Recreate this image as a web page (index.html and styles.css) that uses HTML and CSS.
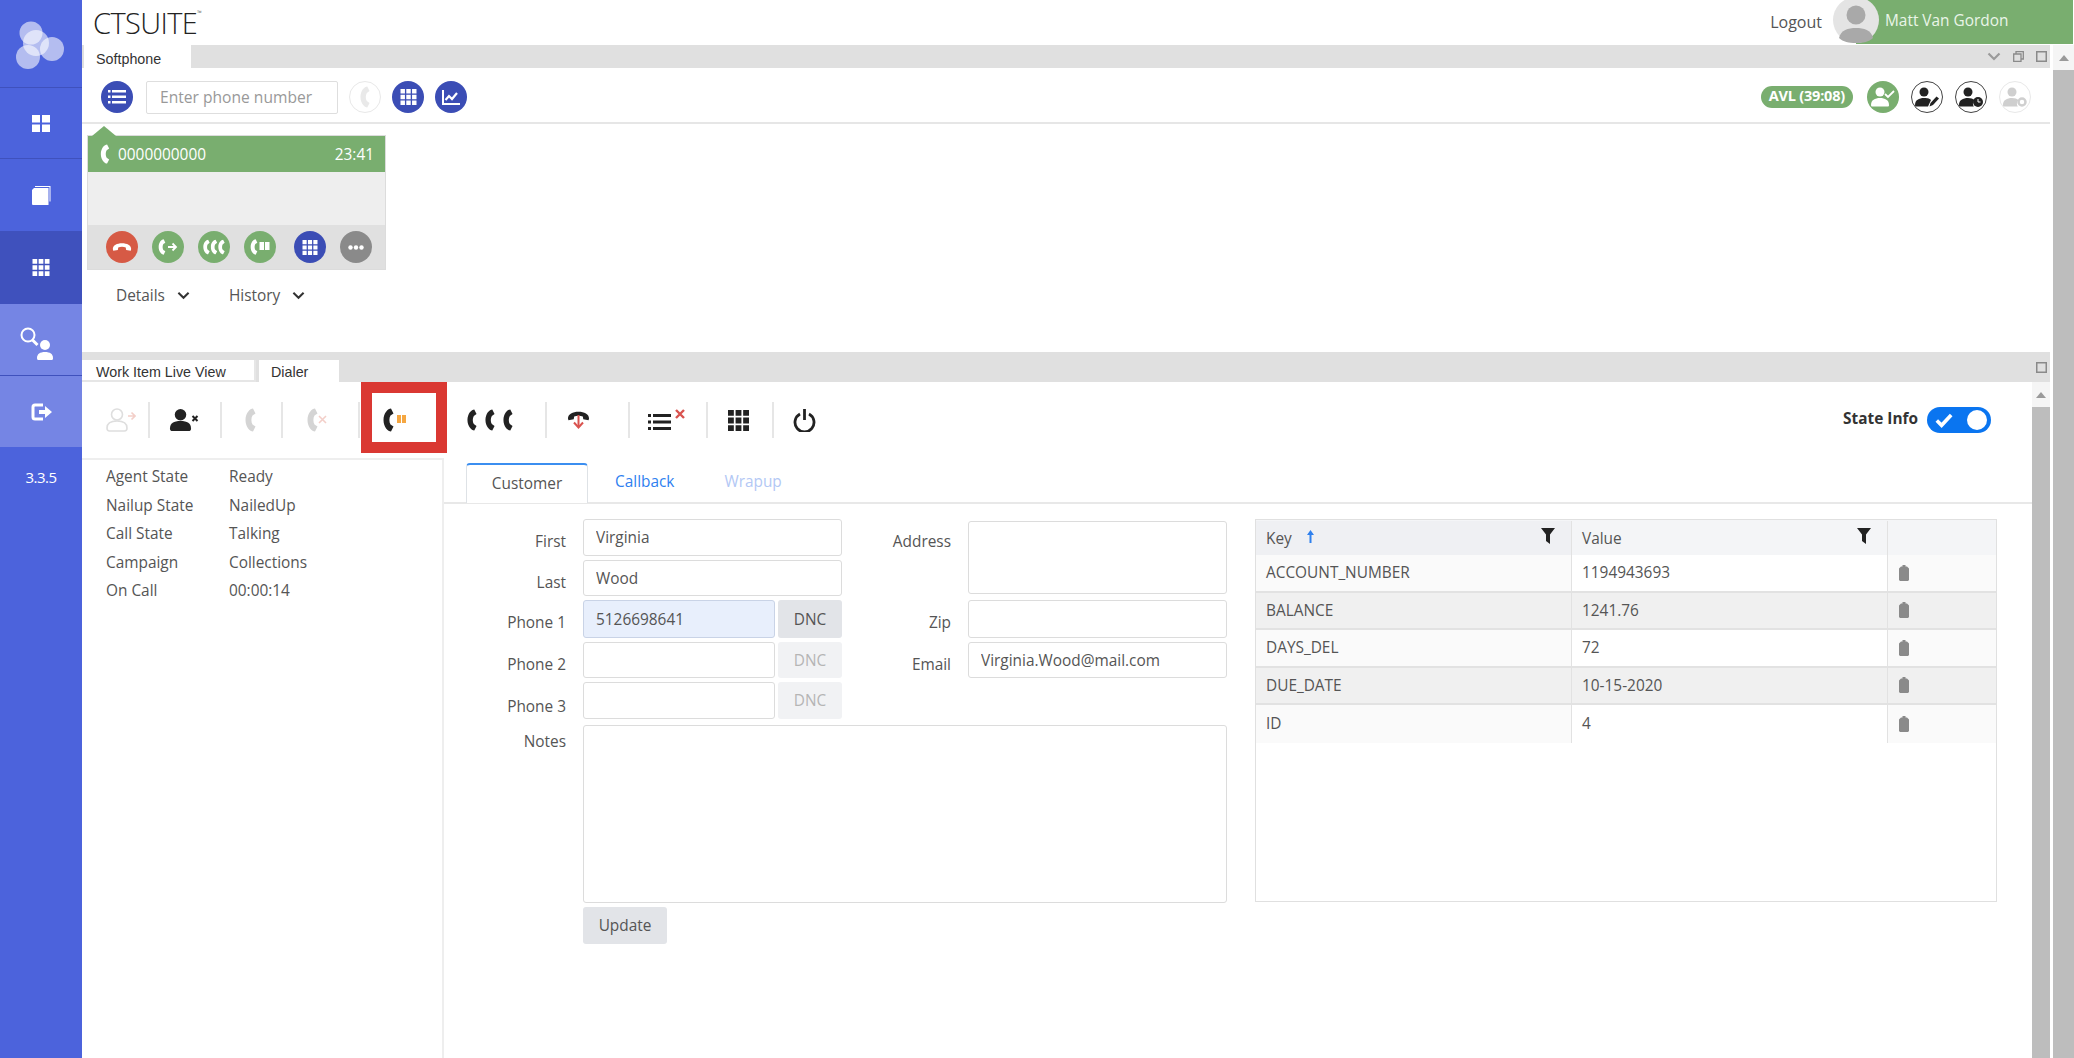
FILE: index.html
```html
<!DOCTYPE html>
<html lang="en">

<head>
  <meta charset="UTF-8">
  <title>CTSuite</title>
  <link rel="stylesheet" href="styles.css">
</head>

<body>
  <svg class="icon-defs" xmlns="http://www.w3.org/2000/svg">
    <symbol id="i-phone" viewBox="0 0 11 24">
      <path d="M8 .5l2.500 5-3 2c-1.500 2.500-1.500 6.500 0 9l3 2-2.500 5C5 23.500.5 19 .5 12S5 .5 8 .5z" />
    </symbol>
    <symbol id="i-person" viewBox="0 0 24 24">
      <circle cx="12" cy="6.500" r="6" />
      <path d="M1 21c0-6 4-8 11-8s11 2 11 8c0 1.500-1 2.500-2.500 2.500h-17C2 23.500 1 22.500 1 21z" />
    </symbol>
    <symbol id="i-grid3" viewBox="0 0 18 18">
      <path d="M0 0h5v5H0zM6.500 0h5v5h-5zM13 0h5v5h-5zM0 6.500h5v5H0zM6.500 6.500h5v5h-5zM13 6.500h5v5h-5zM0 13h5v5H0zM6.500 13h5v5h-5zM13 13h5v5h-5z" />
    </symbol>
    <symbol id="i-hangup" viewBox="0 0 24 12">
      <path d="M1 8.500C1 4 6 1.500 12 1.500S23 4 23 8.500l-.5 2-5.500-1-.5-3c-2.500-1-6.500-1-9 0l-.5 3-5.500 1z" />
    </symbol>
    <symbol id="i-funnel" viewBox="0 0 14 16">
      <path d="M0 0h14L9 6.500V16L5 13V6.500z" />
    </symbol>
    <symbol id="i-trash" viewBox="0 0 10 16">
      <path d="M3.500 0h3v1.500H8l2 2V15l-1 1H1l-1-1V3.500l2-2h1.500z" />
    </symbol>
    <symbol id="i-chevron" viewBox="0 0 14 9">
      <path d="M1.500 1.500L7 7l5.500-5.500" fill="none" stroke="currentColor" stroke-width="2.200" />
    </symbol>
    <symbol id="i-box" viewBox="0 0 11 11">
      <path d="M.75.75h9.500v9.500H.75z" fill="none" stroke="currentColor" stroke-width="1.500" />
    </symbol>
  </svg>

  <div class="app">
    <aside class="sidebar">
      <div class="side-logo">
        <svg width="56" height="60" viewBox="0 0 56 60">
          <g fill="#fff" fill-opacity=".58">
            <circle cx="21" cy="22" r="11.500" />
            <circle cx="26" cy="32" r="13" />
            <circle cx="42" cy="38" r="12" />
            <circle cx="18" cy="46" r="12" />
          </g>
        </svg>
      </div>
      <div class="side-item">
        <svg width="18" height="17" viewBox="0 0 18 17" fill="#fff">
          <path d="M0 0h8v7.500H0zM10 0h8v7.500h-8zM0 9.500h8V17H0zM10 9.500h8V17h-8z" />
        </svg>
      </div>
      <div class="side-item">
        <svg width="19" height="19" viewBox="0 0 19 19" fill="#fff">
          <path d="M3 0h15.500v15.500h-1V1H3z" />
          <path d="M2 2h14.500v17H1a1 1 0 0 1-1-1V4z" />
        </svg>
      </div>
      <div class="side-item side-dark">
        <svg width="18" height="17" fill="#fff"><use href="#i-grid3" /></svg>
      </div>
      <div class="side-item side-light">
        <svg class="side-search" width="34" height="40" viewBox="0 0 34 40" fill="#fff">
          <circle cx="8" cy="15" r="6.500" fill="none" stroke="#fff" stroke-width="2" />
          <path d="M12.500 20l5 5" stroke="#fff" stroke-width="3" />
          <circle cx="25" cy="25" r="5" />
          <path d="M17 38c0-4 3-6 8-6s8 2 8 6c0 1.500-.5 2-1.500 2h-13c-1 0-1.500-.5-1.500-2z" />
        </svg>
      </div>
      <div class="side-item side-light">
        <svg width="21" height="18" viewBox="0 0 21 18" fill="#fff">
          <path d="M12 2H4a2 2 0 0 0-2 2v10a2 2 0 0 0 2 2h8" fill="none" stroke="#fff" stroke-width="3" />
          <path d="M8 7h6V3l7 6-7 6v-4H8z" />
        </svg>
      </div>
      <div class="side-version">3.3.5</div>
    </aside>

    <div class="main">
      <header class="topbar">
        <div class="brand">CTSUITE<sup>™</sup></div>
        <div class="user-area">
          <span class="logout">Logout</span>
          <svg class="avatar" width="46" height="44" viewBox="0 0 46 44">
            <circle cx="23" cy="20" r="23" fill="#e4e4e4" />
            <circle cx="23" cy="15" r="9.500" fill="#a9a9a9" />
            <path d="M6 38c2-8 9-10 17-10s15 2 17 10c-4 4-10 5-17 5S10 42 6 38z" fill="#a9a9a9" />
          </svg>
          <span class="user-pill">Matt Van Gordon</span>
        </div>
      </header>

      <div class="workspace">
        <div class="panels">
          <section class="softphone">
            <div class="tabbar tabbar-top">
              <span class="tab tab-soft">Softphone</span>
              <div class="window-btns">
                <svg class="win-chevron" width="14" height="9"><use href="#i-chevron" /></svg>
                <svg width="11" height="11" viewBox="0 0 11 11" fill="none" stroke="#8a8a8a" stroke-width="1.300">
                  <path d="M.7 3h7.300v7.300H.7zM3 3V.7h7.300V8H8" />
                </svg>
                <svg width="11" height="11"><use href="#i-box" /></svg>
              </div>
            </div>

            <div class="phone-toolbar">
              <span class="circle blue">
                <svg width="18" height="16" viewBox="0 0 18 16" fill="#fff">
                  <path d="M0 1h2.500v2.500H0zM4 1h14v2.500H4zM0 6.500h2.500V9H0zM4 6.500h14V9H4zM0 12h2.500v2.500H0zM4 12h14v2.500H4z" />
                </svg>
              </span>
              <input class="phone-input" type="text" placeholder="Enter phone number">
              <span class="circle faded">
                <svg width="10" height="22" fill="#e9e9e9"><use href="#i-phone" /></svg>
              </span>
              <span class="circle blue">
                <svg width="17" height="16" fill="#fff"><use href="#i-grid3" /></svg>
              </span>
              <span class="circle blue">
                <svg width="18" height="15" viewBox="0 0 18 15" fill="none" stroke="#fff">
                  <path d="M1 0v14h17" stroke-width="2" />
                  <path d="M3.500 10l3.500-4 3 3 5-6" stroke-width="2.200" />
                </svg>
              </span>

              <div class="status-group">
                <span class="avl">AVL (39:08)</span>
                <span class="circle green">
                  <svg width="24" height="20" viewBox="0 0 24 20" fill="#fff">
                    <circle cx="9" cy="5" r="4.500" />
                    <path d="M0 18c0-5 4-7 9-7s9 2 9 7c0 1-.5 1.500-1.500 1.500h-15C.5 19.500 0 19 0 18z" />
                    <path d="M14 7l3 3 6-6" fill="none" stroke="#fff" stroke-width="1.800" />
                  </svg>
                </span>
                <span class="circle outlined">
                  <svg width="24" height="20" viewBox="0 0 24 20" fill="#222">
                    <circle cx="9" cy="5" r="4.500" />
                    <path d="M0 18c0-5 4-7 9-7s6 1 7 2l-3 6.500H1.500C.5 19.500 0 19 0 18z" />
                    <path d="M14.500 19.500l1-3.500 6-6.500 2.500 2-6 6.500z" />
                  </svg>
                </span>
                <span class="circle outlined">
                  <svg width="24" height="20" viewBox="0 0 24 20" fill="#222">
                    <circle cx="9" cy="5" r="4.500" />
                    <path d="M0 18c0-5 4-7 9-7 3 0 5 .7 6.500 2-2 2-2 4.500-.7 6.500H1.500C.5 19.500 0 19 0 18z" />
                    <circle cx="19" cy="15" r="5" />
                    <path d="M19 12v3h2.500" fill="none" stroke="#fff" />
                  </svg>
                </span>
                <span class="circle faded">
                  <svg width="24" height="20" viewBox="0 0 24 20" fill="#cfcfcf">
                    <circle cx="9" cy="5" r="4.500" />
                    <path d="M0 18c0-5 4-7 9-7 3 0 5 .7 6.500 2-2 2-2 4.500-.7 6.500H1.500C.5 19.500 0 19 0 18z" />
                    <circle cx="19" cy="15" r="3.500" fill="none" stroke="#cfcfcf" stroke-width="2.500" />
                  </svg>
                </span>
              </div>
            </div>

            <div class="softphone-body">
              <div class="call-card">
                <div class="call-head">
                  <svg width="10" height="20" fill="#fff"><use href="#i-phone" /></svg>
                  <span class="call-number">0000000000</span>
                  <span class="call-time">23:41</span>
                </div>
                <div class="call-body"></div>
                <div class="call-foot">
                  <span class="circle red">
                    <svg width="20" height="10" fill="#fff"><use href="#i-hangup" /></svg>
                  </span>
                  <span class="circle green">
                    <svg width="20" height="16" viewBox="0 0 20 16" fill="#fff">
                      <use href="#i-phone" width="8" height="16" />
                      <path d="M10 8h8M14.500 4.500L18 8l-3.500 3.500" fill="none" stroke="#fff" stroke-width="1.800" />
                    </svg>
                  </span>
                  <span class="circle green">
                    <svg width="22" height="16" viewBox="0 0 22 16" fill="#fff">
                      <use href="#i-phone" width="7" height="16" />
                      <use href="#i-phone" x="7.500" width="7" height="16" />
                      <use href="#i-phone" x="15" width="7" height="16" />
                    </svg>
                  </span>
                  <span class="circle green">
                    <svg width="20" height="16" viewBox="0 0 20 16" fill="#fff">
                      <use href="#i-phone" width="8" height="16" />
                      <path d="M9.500 3H14v8H9.500zM15 3h4.500v8H15z" />
                    </svg>
                  </span>
                  <span class="circle blue foot-gap">
                    <svg width="16" height="15" fill="#fff"><use href="#i-grid3" /></svg>
                  </span>
                  <span class="circle gray">
                    <svg width="16" height="5" viewBox="0 0 16 5" fill="#fff">
                      <circle cx="2.500" cy="2.500" r="2.200" />
                      <circle cx="8" cy="2.500" r="2.200" />
                      <circle cx="13.500" cy="2.500" r="2.200" />
                    </svg>
                  </span>
                </div>
              </div>
              <div class="call-links">
                <span class="call-link">Details
                  <svg width="13" height="9"><use href="#i-chevron" /></svg>
                </span>
                <span class="call-link">History
                  <svg width="13" height="9"><use href="#i-chevron" /></svg>
                </span>
              </div>
            </div>
          </section>

          <section class="dialer">
            <div class="tabbar tabbar-low">
              <span class="tab tab-live">Work Item Live View</span>
              <span class="tab tab-dialer">Dialer</span>
              <div class="window-btns">
                <svg width="11" height="11"><use href="#i-box" /></svg>
              </div>
            </div>

            <div class="dialer-wrap">
              <div class="dialer-content">
                <div class="dial-toolbar">
                  <svg class="ml-24" width="30" height="24" viewBox="0 0 30 24">
                    <g fill="none" stroke="#dedede" stroke-width="1.600">
                      <circle cx="11" cy="6.500" r="5.500" />
                      <path d="M1 20c0-5 4-7 10-7s10 2 10 7c0 2-1 3-2.500 3h-15C2 23 1 22 1 20z" />
                    </g>
                    <path d="M22 8h7M25.500 4.500L29 8l-3.500 3.500" fill="none" stroke="#f3cfc9" stroke-width="1.600" />
                  </svg>
                  <span class="tool-sep ml-12"></span>
                  <svg class="ml-19" width="30" height="24" viewBox="0 0 30 24">
                    <use href="#i-person" width="23" height="24" fill="#222" />
                    <path d="M23.500 8l5 5m0-5l-5 5" stroke="#222" stroke-width="2" />
                  </svg>
                  <span class="tool-sep ml-21"></span>
                  <svg class="ml-23" width="11" height="24" fill="#d4d4d4"><use href="#i-phone" /></svg>
                  <span class="tool-sep ml-25"></span>
                  <svg class="ml-24" width="20" height="24" viewBox="0 0 20 24">
                    <use href="#i-phone" width="11" height="24" fill="#d4d4d4" />
                    <path d="M12 8l7 7m0-7l-7 7" stroke="#f3cfc9" stroke-width="1.600" />
                  </svg>
                  <span class="tool-sep ml-31"></span>
                  <div class="hold-box ml-1">
                    <svg width="24" height="24" viewBox="0 0 24 24">
                      <use href="#i-phone" width="11" height="24" fill="#222" />
                      <path d="M14 7h4v8h-4zM19 7h4v8h-4z" fill="#f5a742" />
                    </svg>
                  </div>
                  <svg class="ml-20" width="46" height="24" viewBox="0 0 46 24" fill="#222">
                    <use href="#i-phone" width="10" height="24" />
                    <use href="#i-phone" x="18" width="10" height="24" />
                    <use href="#i-phone" x="36" width="10" height="24" />
                  </svg>
                  <span class="tool-sep ml-32"></span>
                  <svg class="ml-20" width="23" height="20" viewBox="0 0 23 20">
                    <use href="#i-hangup" width="23" height="12" fill="#222" />
                    <path d="M11.500 5v12" stroke="#d9534f" stroke-width="2" />
                    <path d="M7 12.500l4.500 5 4.500-5" fill="none" stroke="#d9534f" stroke-width="2" />
                  </svg>
                  <span class="tool-sep ml-38"></span>
                  <svg class="ml-18" width="38" height="22" viewBox="0 0 38 22">
                    <path d="M0 5h3v3H0zM5 5h18v3H5zM0 11.500h3v3H0zM5 11.500h18v3H5zM0 18h3v3H0zM5 18h18v3H5z" fill="#222" />
                    <path d="M28 1l8 8m0-8l-8 8" stroke="#d9534f" stroke-width="2.400" />
                  </svg>
                  <span class="tool-sep ml-20"></span>
                  <svg class="ml-19" width="23" height="21" fill="#222"><use href="#i-grid3" /></svg>
                  <span class="tool-sep ml-22"></span>
                  <svg class="ml-19" width="23" height="24" viewBox="0 0 23 24" fill="none" stroke="#222" stroke-width="2.800">
                    <path d="M7 6a9.500 9.500 0 1 0 9 0" />
                    <path d="M11.500 1v11" />
                  </svg>
                  <div class="state-info">
                    <span class="state-label">State Info</span>
                    <span class="toggle">
                      <svg width="18" height="15" viewBox="0 0 15 12" fill="none" stroke="#fff" stroke-width="3">
                        <path d="M1.500 6l4 4 8-8.500" />
                      </svg>
                      <span class="toggle-knob"></span>
                    </span>
                  </div>
                </div>

                <div class="dialer-lower">
                  <div class="state-pane">
                    <div class="state-row"><span class="state-key">Agent State</span><span>Ready</span></div>
                    <div class="state-row"><span class="state-key">Nailup State</span><span>NailedUp</span></div>
                    <div class="state-row"><span class="state-key">Call State</span><span>Talking</span></div>
                    <div class="state-row"><span class="state-key">Campaign</span><span>Collections</span></div>
                    <div class="state-row"><span class="state-key">On Call</span><span>00:00:14</span></div>
                  </div>

                  <div class="detail-pane">
                    <div class="detail-tabs">
                      <span class="detail-tab active">Customer</span>
                      <span class="detail-tab link">Callback</span>
                      <span class="detail-tab disabled">Wrapup</span>
                    </div>

                    <div class="detail-body">
                      <form class="customer-form">
                        <label class="form-label">First</label>
                        <input class="form-input" type="text" value="Virginia">
                        <label class="form-label side">Address</label>
                        <textarea class="form-input address"></textarea>

                        <label class="form-label">Last</label>
                        <input class="form-input" type="text" value="Wood">

                        <label class="form-label">Phone 1</label>
                        <div class="phone-field">
                          <input class="form-input dialing" type="text" value="5126698641">
                          <span class="dnc">DNC</span>
                        </div>
                        <label class="form-label side">Zip</label>
                        <input class="form-input" type="text">

                        <label class="form-label">Phone 2</label>
                        <div class="phone-field">
                          <input class="form-input" type="text">
                          <span class="dnc off">DNC</span>
                        </div>
                        <label class="form-label side">Email</label>
                        <input class="form-input" type="text" value="Virginia.Wood@mail.com">

                        <label class="form-label low">Phone 3</label>
                        <div class="phone-field">
                          <input class="form-input" type="text">
                          <span class="dnc off">DNC</span>
                        </div>

                        <label class="form-label notes-label">Notes</label>
                        <textarea class="form-input notes"></textarea>

                        <button class="update-btn" type="button">Update</button>
                      </form>

                      <div class="kv-table">
                        <div class="kv-row kv-head">
                          <div class="kv-cell kv-key">Key
                            <svg class="sort-arrow" width="7" height="13" viewBox="0 0 7 13" fill="#2f80ed">
                              <path d="M3.500 0L7 5H4.500v8h-2V5H0z" />
                            </svg>
                            <svg class="funnel" width="14" height="16" fill="#222"><use href="#i-funnel" /></svg>
                          </div>
                          <div class="kv-cell">Value
                            <svg class="funnel" width="14" height="16" fill="#222"><use href="#i-funnel" /></svg>
                          </div>
                          <div class="kv-cell"></div>
                        </div>
                        <div class="kv-row">
                          <div class="kv-cell">ACCOUNT_NUMBER</div>
                          <div class="kv-cell">1194943693</div>
                          <div class="kv-cell"><svg width="10" height="16" fill="#8a8a8a"><use href="#i-trash" /></svg></div>
                        </div>
                        <div class="kv-row">
                          <div class="kv-cell">BALANCE</div>
                          <div class="kv-cell">1241.76</div>
                          <div class="kv-cell"><svg width="10" height="16" fill="#8a8a8a"><use href="#i-trash" /></svg></div>
                        </div>
                        <div class="kv-row">
                          <div class="kv-cell">DAYS_DEL</div>
                          <div class="kv-cell">72</div>
                          <div class="kv-cell"><svg width="10" height="16" fill="#8a8a8a"><use href="#i-trash" /></svg></div>
                        </div>
                        <div class="kv-row">
                          <div class="kv-cell">DUE_DATE</div>
                          <div class="kv-cell">10-15-2020</div>
                          <div class="kv-cell"><svg width="10" height="16" fill="#8a8a8a"><use href="#i-trash" /></svg></div>
                        </div>
                        <div class="kv-row">
                          <div class="kv-cell">ID</div>
                          <div class="kv-cell">4</div>
                          <div class="kv-cell"><svg width="10" height="16" fill="#8a8a8a"><use href="#i-trash" /></svg></div>
                        </div>
                      </div>
                    </div>
                  </div>
                </div>
              </div>

              <div class="scrollbar scrollbar-inner">
                <span class="scroll-arrow"></span>
                <span class="scroll-thumb"></span>
              </div>
            </div>
          </section>
        </div>

        <div class="scrollbar scrollbar-outer">
          <span class="scroll-arrow"></span>
          <span class="scroll-thumb"></span>
        </div>
      </div>
    </div>
  </div>
</body>

</html>
```
FILE: styles.css
```css
* {
  box-sizing: border-box;
}

html,
body {
  height: 100%;
}

body {
  margin: 0;
  overflow: hidden;
  background-color: #fff;
  color: #555;
  font-family: "Open Sans", "Liberation Sans", sans-serif;
  font-size: 15.400px;
}

svg {
  flex: none;
  display: block;
}

.icon-defs {
  display: none;
}

.app {
  display: flex;
  height: 100%;
}

/* left nav */
.sidebar {
  width: 82px;
  flex: none;
  background-color: #4c63dc;
}

.side-logo {
  height: 88px;
  padding: 11px 0 0 10px;
  border-bottom: 1px solid #3f51bd;
}

.side-item {
  height: 71px;
  display: flex;
  align-items: center;
  justify-content: center;
  border-bottom: 1px solid #3f51bd;
}

.side-item:nth-child(3) {
  height: 72px;
  border-bottom: 0;
}

.side-dark {
  height: 73px;
  border-bottom: 0;
  background-color: #3f51bd;
}

.side-light {
  height: 72px;
  background-color: #7585e4;
}

.side-light:nth-child(6) {
  height: 71px;
  border-bottom: 0;
}

.side-search {
  margin-left: -8px;
}

.side-version {
  padding-top: 20px;
  text-align: center;
  color: #fff;
  font-size: 15px;
  letter-spacing: -.5px;
}

.main {
  flex: 1;
  min-width: 0;
  display: flex;
  flex-direction: column;
}

/* top header */
.topbar {
  height: 45px;
  flex: none;
  display: flex;
  align-items: center;
  justify-content: space-between;
  padding: 0 1px 1px 11px;
}

.brand {
  color: #222;
  font-family: "Open Sans", sans-serif;
  font-size: 29px;
  font-weight: 300;
  letter-spacing: -.6px;
  line-height: 1;
}

.brand sup {
  font-size: 6px;
  vertical-align: 19px;
  line-height: 0;
}

.user-area {
  display: flex;
  align-items: center;
  height: 44px;
}

.logout {
  margin-right: 11px;
  font-size: 16px;
}

.avatar {
  position: relative;
  z-index: 1;
}

.user-pill {
  width: 217px;
  height: 44px;
  margin-left: -23px;
  padding-left: 29px;
  line-height: 41px;
  background-color: #79ae6f;
  color: #eaf5e8;
}

.workspace {
  flex: 1;
  min-height: 0;
  display: flex;
}

.panels {
  width: 1969px;
  display: flex;
  flex-direction: column;
}

/* tab strips */
.tabbar {
  display: flex;
  align-items: flex-end;
  background-color: #e0e0e0;
  color: #333;
  font-family: "Liberation Sans", Arial, sans-serif;
  font-size: 14.300px;
}

.tabbar-top {
  height: 23px;
  padding-left: 2px;
}

.tabbar-low {
  height: 30px;
}

.tab {
  background-color: #fff;
  padding-left: 14px;
  line-height: 24px;
}

.tab-soft {
  width: 107px;
  height: 23px;
  padding-left: 12px;
  line-height: 28px;
}

.tab-live {
  width: 174px;
  border-right: 2px solid #e6e6e6;
  border-bottom: 2px solid #e6e6e6;
  height: 22px;
}

.tab-dialer {
  width: 80px;
  margin-left: 3px;
  height: 22px;
  padding-left: 12px;
}

.window-btns {
  margin-left: auto;
  display: flex;
  align-items: center;
  gap: 12px;
  align-self: center;
  padding-right: 3px;
  color: #8a8a8a;
}

.win-chevron {
  color: #9a9a9a;
}

/* softphone panel */
.softphone {
  height: 307px;
  flex: none;
  display: flex;
  flex-direction: column;
}

.phone-toolbar {
  height: 56px;
  flex: none;
  display: flex;
  align-items: center;
  gap: 11px;
  padding: 4px 19px 0 19px;
  border-bottom: 2px solid #e6e6e6;
}

.circle {
  width: 32px;
  height: 32px;
  flex: none;
  display: flex;
  align-items: center;
  justify-content: center;
  border-radius: 50%;
}

.blue {
  background-color: #3b4db5;
}

.green {
  background-color: #79ae6f;
}

.red {
  background-color: #d65a45;
}

.gray {
  background-color: #8a8a8a;
}

.faded {
  border: 1px solid #e8e8e8;
}

.outlined {
  border: 1px solid #444;
}

.phone-input {
  width: 192px;
  height: 33px;
  margin-left: 2px;
  padding: 0 13px;
  border: 1px solid #dedede;
  border-radius: 2px;
  color: #555;
  font-family: inherit;
  font-size: 15.600px;
}

.phone-input::placeholder {
  color: #999;
}

.status-group {
  margin-left: auto;
  display: flex;
  align-items: center;
  gap: 12px;
}

.avl {
  height: 22px;
  margin-right: 2px;
  padding: 0 8px;
  border-radius: 11px;
  background-color: #79ae6f;
  color: #fff;
  font-size: 14.500px;
  font-weight: 700;
  line-height: 20px;
  letter-spacing: -.2px;
}

.softphone-body {
  flex: 1;
  padding: 11px 0 0 5px;
}

.call-card {
  position: relative;
  width: 299px;
  height: 135px;
  display: flex;
  flex-direction: column;
  border: 1px solid #dcdcdc;
}

.call-card::before {
  content: "";
  position: absolute;
  left: 4px;
  top: -10px;
  border-left: 12px solid transparent;
  border-right: 12px solid transparent;
  border-bottom: 10px solid #79ae6f;
}

.call-head {
  height: 36px;
  flex: none;
  display: flex;
  align-items: center;
  padding: 0 11px 0 12px;
  background-color: #79ae6f;
  color: #fff;
}

.call-number {
  margin-left: 8px;
}

.call-time {
  margin-left: auto;
}

.call-body {
  flex: 1;
  background-color: #eee;
}

.call-foot {
  height: 44px;
  flex: none;
  display: flex;
  align-items: center;
  gap: 14px;
  padding-left: 18px;
  background-color: #e0e0e0;
}

.foot-gap {
  margin-left: 4px;
}

.call-links {
  display: flex;
  gap: 39px;
  padding: 15px 0 0 29px;
}

.call-link {
  display: flex;
  align-items: center;
  gap: 12px;
  line-height: 21px;
}

.call-link svg {
  color: #333;
}

/* dialer panel */
.dialer {
  flex: 1;
  min-height: 0;
  display: flex;
  flex-direction: column;
}

.dialer-wrap {
  flex: 1;
  min-height: 0;
  display: flex;
}

.dialer-content {
  flex: 1;
  min-width: 0;
  display: flex;
  flex-direction: column;
}

.dial-toolbar {
  height: 76px;
  flex: none;
  display: flex;
  align-items: center;
}

.tool-sep {
  width: 2px;
  height: 36px;
  flex: none;
  background-color: #e6e6e6;
}

.ml-1 { margin-left: 1px; }
.ml-12 { margin-left: 12px; }
.ml-18 { margin-left: 18px; }
.ml-19 { margin-left: 19px; }
.ml-20 { margin-left: 20px; }
.ml-21 { margin-left: 21px; }
.ml-22 { margin-left: 22px; }
.ml-23 { margin-left: 23px; }
.ml-24 { margin-left: 24px; }
.ml-25 { margin-left: 25px; }
.ml-31 { margin-left: 31px; }
.ml-32 { margin-left: 32px; }
.ml-38 { margin-left: 38px; }

.hold-box {
  width: 86px;
  height: 71px;
  flex: none;
  align-self: flex-start;
  display: flex;
  align-items: center;
  padding: 4px 0 0 11px;
  border: 11px solid #da3832;
}

.state-info {
  margin-left: auto;
  display: flex;
  align-items: center;
  gap: 9px;
  padding-right: 41px;
}

.state-label {
  margin-top: -4px;
  color: #333;
  font-weight: 700;
}

.toggle {
  width: 64px;
  height: 26px;
  display: flex;
  align-items: center;
  justify-content: space-between;
  padding: 0 4px 0 8px;
  border-radius: 13px;
  background-color: #0a75f0;
}

.toggle-knob {
  width: 20px;
  height: 20px;
  border-radius: 50%;
  background-color: #fff;
}

.dialer-lower {
  flex: 1;
  min-height: 0;
  display: flex;
}

.state-pane {
  width: 362px;
  flex: none;
  padding: 7px 0 0 24px;
  border-top: 2px solid #eee;
  border-right: 2px solid #eee;
}

.state-row {
  display: flex;
  height: 28.500px;
  line-height: 19px;
}

.state-key {
  width: 123px;
}

.detail-pane {
  flex: 1;
  min-width: 0;
  padding-top: 5px;
}

.detail-tabs {
  height: 41px;
  display: flex;
  padding-left: 22px;
  border-bottom: 2px solid #e8e8e8;
}

.detail-tab {
  height: 40px;
  line-height: 38px;
}

.detail-tab.active {
  width: 122px;
  text-align: center;
  border: 1px solid #dee2e6;
  border-top: 2px solid #3b8ef0;
  border-bottom: 0;
  border-radius: 4px 4px 0 0;
  background-color: #fff;
}

.detail-tab.link {
  margin-left: 27px;
  color: #2f7ff0;
}

.detail-tab.disabled {
  margin-left: 50px;
  color: #b3c8f5;
}

.detail-body {
  display: flex;
  gap: 28px;
  padding-top: 15px;
}

.customer-form {
  width: 783px;
  flex: none;
  display: grid;
  grid-template-columns: 122px 259px 92px 259px;
  grid-template-rows: 37px 36px 38px 36px 37px 180px 37px;
  column-gap: 17px;
  row-gap: 4px;
}

.form-label {
  grid-column: 1;
  padding-top: 13px;
  text-align: right;
  line-height: 19px;
}

.form-label.side {
  grid-column: 3;
}

.form-label.low {
  padding-top: 15px;
}

.form-input {
  width: 100%;
  height: 100%;
  min-width: 0;
  padding: 0 12px;
  border: 1px solid #dcdcdc;
  border-radius: 3px;
  background-color: #fff;
  color: #555;
  font-family: inherit;
  font-size: 15.400px;
  resize: none;
}

.side + .form-input {
  grid-column: 4;
}

.address {
  grid-row: 1 / span 2;
  margin-top: 2px;
  height: 73px;
}

.phone-field {
  display: flex;
  gap: 3px;
}

.form-input.dialing {
  background-color: #e8effc;
  border-color: #c9d3e6;
}

.phone-field .form-input {
  width: 192px;
  flex: none;
}

.dnc {
  flex: 1;
  display: flex;
  align-items: center;
  justify-content: center;
  border-radius: 3px;
  background-color: #e2e4e8;
}

.dnc.off {
  background-color: #f1f2f4;
  color: #b5b5b5;
}

.form-label.notes-label {
  padding-top: 9px;
}

.notes {
  grid-column: 2 / span 3;
  align-self: end;
  height: 178px;
}

.update-btn {
  grid-column: 2;
  width: 84px;
  height: 37px;
  padding: 0;
  border: 0;
  border-radius: 3px;
  background-color: #e2e4e8;
  color: #555;
  font-family: inherit;
  font-size: 15.400px;
}

/* key / value grid */
.kv-table {
  width: 742px;
  height: 383px;
  flex: none;
  border: 1px solid #e0e0e0;
}

.kv-row {
  display: grid;
  grid-template-columns: 316px 316px 1fr;
  height: 37.500px;
  border-bottom: 2px solid #e2e2e2;
}

.kv-row:last-child {
  border-bottom: 0;
}

.kv-row:nth-child(odd) {
  background-color: #f0f0f0;
}

.kv-row:nth-child(even) {
  background-color: #fafafa;
}

.kv-row:nth-child(even) .kv-cell:nth-child(2) {
  background-color: #fff;
}

.kv-row.kv-head {
  height: 35px;
  padding-top: 1px;
  border-bottom: 0;
  background-color: #f4f5f7;
}

.kv-head .kv-key {
  background-color: #eff0f3;
}

.kv-cell {
  display: flex;
  align-items: center;
  padding-left: 10px;
  border-right: 1px solid #e2e2e2;
}

.kv-cell:last-child {
  border-right: 0;
  padding-left: 11px;
}

.sort-arrow {
  margin: -3px 0 0 15px;
}

.funnel {
  margin: -5px 16px 0 auto;
}

/* fake scrollbars */
.scrollbar {
  flex: none;
  display: flex;
  flex-direction: column;
  background-color: #f5f5f5;
}

.scrollbar-outer {
  width: 21px;
  margin-left: 3px;
}

.scrollbar-inner {
  width: 18px;
  margin-left: 0;
}

.scroll-arrow {
  height: 25px;
  flex: none;
  display: flex;
  align-items: center;
  justify-content: center;
}

.scroll-arrow::before {
  content: "";
  border-left: 5px solid transparent;
  border-right: 5px solid transparent;
  border-bottom: 6px solid #9a9a9a;
}

.scroll-thumb {
  flex: 1;
  background-color: #bdbdbd;
}
```
